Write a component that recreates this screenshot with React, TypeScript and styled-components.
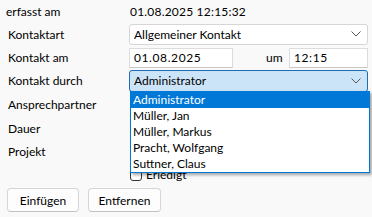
import React from "react";
import styled, { createGlobalStyle } from "styled-components";

const Global = createGlobalStyle`
  html, body { margin: 0; padding: 0; background: #f9f9f9; }
  body { font-family: Lato, "Liberation Sans", Arial, sans-serif; font-size: 12px; color: #000; }
`;

const Page = styled.div`
  width: 372px;
  height: 217px;
  background: #f9f9f9;
  overflow: hidden;
  position: relative;
`;

const Form = styled.div`
  display: grid;
  grid-template-columns: 121px 1fr;
  grid-template-rows: 22px 24px 23px 23px 24px 24px 23px 23px;
  padding: 0 4px 0 8px;
`;

const Label = styled.div<{ $shift?: number }>`
  display: flex;
  align-items: center;
  margin-left: ${(p) => p.$shift ?? 0}px;
  white-space: nowrap;
`;

const Cell = styled.div`
  display: flex;
  align-items: center;
  position: relative;
`;

const Value = styled.span`
  padding-left: 1px;
  letter-spacing: 0.2px;
`;

const Combo = styled.div<{ $focused?: boolean }>`
  position: relative;
  box-sizing: border-box;
  width: 239px;
  height: ${(p) => (p.$focused ? 22 : 21)}px;
  display: flex;
  align-items: center;
  justify-content: space-between;
  padding: 0 6px 0 4px;
  border: 1px solid ${(p) => (p.$focused ? "#1f6cb3" : "#d6d6d6")};
  border-radius: 3px;
  background: ${(p) => (p.$focused ? "#cce4f7" : "#ffffff")};
`;

const TextInput = styled.div<{ $w: number }>`
  box-sizing: border-box;
  width: ${(p) => p.$w}px;
  height: 20px;
  display: flex;
  align-items: center;
  padding: 0 4px;
  border: 1px solid #dcdcdc;
  border-bottom-color: #c8c8c8;
  background: #fff;
  letter-spacing: 0.6px;
`;

const DateLine = styled.div`
  display: flex;
  align-items: center;
  width: 239px;
`;

const Um = styled.span`
  margin-left: 33px;
  width: 23px;
`;

const Chevron = () => (
  <svg width="10" height="6" viewBox="0 0 10 6">
    <path d="M0.5 0.5 L5 5 L9.5 0.5" fill="none" stroke="#5a5a5a" strokeWidth="1" />
  </svg>
);

const List = styled.div`
  position: absolute;
  left: 0;
  top: 100%;
  width: 240px;
  box-sizing: border-box;
  border: 1px solid #0078d7;
  background: #fff;
  box-shadow: 2px 2px 3px rgba(0, 0, 0, 0.35);
  z-index: 5;
`;

const Item = styled.div<{ $active?: boolean }>`
  height: 16px;
  line-height: 16px;
  padding-left: 2px;
  background: ${(p) => (p.$active ? "#0078d7" : "transparent")};
  color: ${(p) => (p.$active ? "#fff" : "#000")};
  white-space: nowrap;
`;

const CheckLine = styled.label`
  display: flex;
  align-items: center;
  gap: 4px;
  margin-left: 1px;
`;

const Box = styled.span`
  width: 12px;
  height: 12px;
  box-sizing: border-box;
  border: 1px solid #333;
  border-radius: 3px;
  background: #fff;
`;

const Buttons = styled.div`
  display: flex;
  gap: 9px;
  padding: 2px 0 0 7px;
`;

const Button = styled.button<{ $w: number }>`
  box-sizing: border-box;
  width: ${(p) => p.$w}px;
  height: 24px;
  font: inherit;
  color: #000;
  background: #fdfdfd;
  border: 1px solid #d5d5d5;
  border-bottom-color: #c2c2c2;
  border-radius: 4px;
  padding: 0;
`;

const names = ["Administrator", "Müller, Jan", "Müller, Markus", "Pracht, Wolfgang", "Suttner, Claus"];

export default function App() {
  return (
    <Page>
      <Global />
      <Form>
        <Label $shift={-2}>erfasst am</Label>
        <Cell>
          <Value>01.08.2025 12:15:32</Value>
        </Cell>

        <Label>Kontaktart</Label>
        <Cell>
          <Combo>
            <span>Allgemeiner Kontakt</span>
            <Chevron />
          </Combo>
        </Cell>

        <Label>Kontakt am</Label>
        <Cell>
          <DateLine>
            <TextInput $w={104}>01.08.2025</TextInput>
            <Um>um</Um>
            <TextInput $w={79}>12:15</TextInput>
          </DateLine>
        </Cell>

        <Label>Kontakt durch</Label>
        <Cell>
          <Combo $focused>
            <span>Administrator</span>
            <Chevron />
            <List>
              {names.map((n, i) => (
                <Item key={n} $active={i === 0}>
                  {n}
                </Item>
              ))}
            </List>
          </Combo>
        </Cell>

        <Label>Ansprechpartner</Label>
        <Cell />

        <Label>Dauer</Label>
        <Cell />

        <Label>Projekt</Label>
        <Cell />

        <Label />
        <Cell>
          <CheckLine>
            <Box />
            <span>Erledigt</span>
          </CheckLine>
        </Cell>
      </Form>
      <Buttons>
        <Button $w={72}>Einfügen</Button>
        <Button $w={73}>Entfernen</Button>
      </Buttons>
    </Page>
  );
}
